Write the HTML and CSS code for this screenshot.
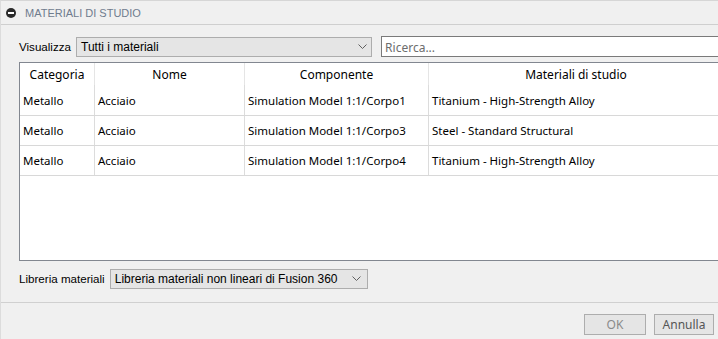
FILE: index.html
```html
<!DOCTYPE html>
<html lang="it">
<head>
    <meta charset="UTF-8">
    <meta name="viewport" content="width=device-width, initial-scale=1.0">
    <title>Materiali di studio</title>
    <link rel="stylesheet" href="styles.css">
</head>
<body>
    <div class="dialog">
        <div class="titlebar">
            <svg class="collapse" width="10" height="10" viewBox="0 0 10 10">
                <circle cx="5" cy="5" r="5" fill="#2b2b2b"/>
                <rect x="2" y="4" width="6" height="2" fill="#ffffff"/>
            </svg>
            <span>MATERIALI DI STUDIO</span>
        </div>

        <div class="content">
            <div class="filter_row">
                <label class="label">Visualizza</label>
                <div class="select select_view">
                    <span>Tutti i materiali</span>
                    <svg class="chevron" width="9" height="5" viewBox="0 0 9 5"><path d="M0.5 0.5 L4.5 4.5 L8.5 0.5" fill="none" stroke="#606060" stroke-width="1"/></svg>
                </div>
                <div class="search">Ricerca...</div>
            </div>

            <div class="table_box">
                <table class="materials">
                    <thead>
                        <tr>
                            <th class="c1">Categoria</th>
                            <th class="c2">Nome</th>
                            <th class="c3">Componente</th>
                            <th class="c4">Materiali di studio</th>
                        </tr>
                    </thead>
                    <tbody>
                        <tr>
                            <td>Metallo</td>
                            <td>Acciaio</td>
                            <td>Simulation Model 1:1/Corpo1</td>
                            <td>Titanium - High-Strength Alloy</td>
                        </tr>
                        <tr>
                            <td>Metallo</td>
                            <td>Acciaio</td>
                            <td>Simulation Model 1:1/Corpo3</td>
                            <td>Steel - Standard Structural</td>
                        </tr>
                        <tr>
                            <td>Metallo</td>
                            <td>Acciaio</td>
                            <td>Simulation Model 1:1/Corpo4</td>
                            <td>Titanium - High-Strength Alloy</td>
                        </tr>
                    </tbody>
                </table>
            </div>

            <div class="library_row">
                <label class="label">Libreria materiali</label>
                <div class="select select_lib">
                    <span>Libreria materiali non lineari di Fusion 360</span>
                    <svg class="chevron" width="9" height="5" viewBox="0 0 9 5"><path d="M0.5 0.5 L4.5 4.5 L8.5 0.5" fill="none" stroke="#606060" stroke-width="1"/></svg>
                </div>
            </div>
        </div>

        <div class="footer">
            <button class="btn btn_ok" disabled>OK</button>
            <button class="btn">Annulla</button>
        </div>
    </div>
</body>
</html>
```

FILE: styles.css
```css
body {
    margin: 0;
    padding: 0;
    background-color: #f0f0f0;
    font-family: "Noto Sans", "Open Sans", sans-serif;
    font-size: 12px;
    color: #000;
    overflow: hidden;
}
.dialog {
    width: 740px;
    height: 339px;
    border-top: 1px solid #d6d6d6;
    border-left: 1px solid #dcdcdc;
    box-sizing: border-box;
}
/* Title */
.titlebar {
    height: 23px;
    display: flex;
    align-items: center;
    gap: 9px;
    padding-left: 5px;
    border-bottom: 1px solid #cfcfcf;
    color: #6f7c8e;
    font-family: "Liberation Sans", sans-serif;
    font-size: 11px;
}
.collapse {
    flex: none;
}
.content {
    padding: 11px 0 0 18px;
    height: 278px;
    box-sizing: border-box;
    border-bottom: 1px solid #d0d0d0;
}
/* Top filters */
.filter_row, .library_row {
    display: flex;
    align-items: center;
    height: 21px;
}
.label {
    font-family: "Liberation Sans", sans-serif;
    font-size: 11.6px;
    margin-right: 5px;
}
.select {
    display: flex;
    align-items: center;
    justify-content: space-between;
    height: 20px;
    box-sizing: border-box;
    border: 1px solid #adadad;
    background-color: #e5e5e5;
    padding: 0 4px 0 4px;
    font-family: "Liberation Sans", sans-serif;
    font-size: 12px;
}
.select_view {
    width: 297px;
}
.select_lib {
    width: 258px;
    padding-right: 6px;
}
.search {
    margin-left: 9px;
    width: 360px;
    height: 21px;
    box-sizing: border-box;
    border: 1px solid #7a7a7a;
    background-color: #fff;
    padding: 2px 4px 0 3px;
    color: #6d6d6d;
    font-size: 12px;
}
/* Table */
.table_box {
    margin-top: 5px;
    width: 720px;
    height: 199px;
    box-sizing: border-box;
    border: 1px solid #828790;
    background-color: #fff;
    font-size: 11.5px;
}
.materials {
    border-collapse: collapse;
    table-layout: fixed;
    width: 700px;
}
.materials th {
    height: 22px;
    font-weight: normal;
    font-size: 12px;
    text-align: center;
    padding: 0;
    border-right: 1px solid #e5e5e5;
}
.materials td {
    height: 30px;
    padding: 1px 0 0 3px;
    border-right: 1px solid #dcdcdc;
    border-bottom: 1px solid #d8d8d8;
    white-space: nowrap;
    box-sizing: border-box;
}
.c1 { width: 74px; }
.c2 { width: 149px; }
.c3 { width: 183px; }
.c4 { width: 294px; }
.library_row {
    margin-top: 7px;
}
/* Buttons */
.footer {
    display: flex;
    justify-content: flex-end;
    gap: 8px;
    padding: 11px 0 0 0;
    width: 713px;
}
.btn {
    height: 21px;
    box-sizing: border-box;
    border: 1px solid #adadad;
    background-color: #e5e5e5;
    color: #555;
    font-family: "Noto Sans", sans-serif;
    font-size: 12px;
    padding: 0;
}
.btn_ok {
    width: 62px;
    color: #8a8a8a;
}
.btn:not(.btn_ok) {
    width: 60px;
}
```
